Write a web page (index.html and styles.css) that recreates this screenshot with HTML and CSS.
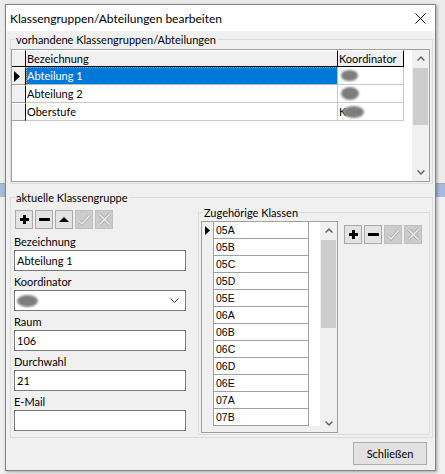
FILE: index.html
```html
<!DOCTYPE html>
<html>
<head>
<meta charset="utf-8">
<link rel="stylesheet" href="styles.css">
</head>
<body>
<div class="window">
  <div class="titlebar">
    <span class="title">Klassengruppen/Abteilungen bearbeiten</span>
    <svg class="close" width="11" height="11" viewBox="0 0 11 11"><path d="M0.5 0.5L10.5 10.5M10.5 0.5L0.5 10.5" stroke="#111" stroke-width="1" fill="none"/></svg>
  </div>
  <div class="client">
    <div class="group g1">
      <span class="caption">vorhandene Klassengruppen/Abteilungen</span>
      <div class="grid1">
        <div class="grid1-body">
          <div class="grow head">
            <div class="rh"></div>
            <div class="c1 hc">Bezeichnung</div>
            <div class="c2 hc">Koordinator</div>
          </div>
          <div class="grow">
            <div class="rh"><svg width="6" height="11" viewBox="0 0 6 11"><path d="M0 0L6 5.5L0 11z" fill="#000"/></svg></div>
            <div class="c1 sel">Abteilung 1</div>
            <div class="c2"><span class="blob b1"></span></div>
          </div>
          <div class="grow">
            <div class="rh"></div>
            <div class="c1">Abteilung 2</div>
            <div class="c2"><span class="blob b2"></span></div>
          </div>
          <div class="grow">
            <div class="rh"></div>
            <div class="c1">Oberstufe</div>
            <div class="c2">K<span class="blob b3"></span></div>
          </div>
        </div>
        <div class="vscroll">
          <div class="sb-btn"><svg width="8" height="5" viewBox="0 0 8 5"><path d="M0.6 4.4L4 1L7.4 4.4" fill="none" stroke="#606060" stroke-width="1.4"/></svg></div>
          <div class="sb-track"><div class="thumb t1"></div></div>
          <div class="sb-btn"><svg width="8" height="5" viewBox="0 0 8 5"><path d="M0.6 0.6L4 4L7.4 0.6" fill="none" stroke="#606060" stroke-width="1.4"/></svg></div>
        </div>
      </div>
    </div>

    <div class="group g2">
      <span class="caption">aktuelle Klassengruppe</span>
      <div class="g2-body">
        <div class="leftcol">
          <div class="toolbar tl">
            <div class="tb"><svg width="9" height="9" viewBox="0 0 9 9"><path d="M3 0h3v3h3v3h-3v3h-3v-3h-3v-3h3z" fill="#000"/></svg></div>
            <div class="tb"><svg width="11" height="3" viewBox="0 0 11 3"><rect width="11" height="3" fill="#000"/></svg></div>
            <div class="tb"><svg width="10" height="5" viewBox="0 0 10 5"><path d="M0 5L5 0L10 5z" fill="#000"/></svg></div>
            <div class="tb dis"><svg width="14" height="12" viewBox="0 0 14 12"><path d="M1.5 6.5L5 10L12.5 1.5" fill="none" stroke="#ababab" stroke-width="3"/><path d="M1.5 6.5L5 10L12.5 1.5" fill="none" stroke="#ededed" stroke-width="1.4"/></svg></div>
            <div class="tb dis"><svg width="13" height="13" viewBox="0 0 13 13"><path d="M1.5 1.5L11.5 11.5M11.5 1.5L1.5 11.5" fill="none" stroke="#ababab" stroke-width="3.4"/><path d="M1.5 1.5L11.5 11.5M11.5 1.5L1.5 11.5" fill="none" stroke="#ededed" stroke-width="1.6"/></svg></div>
          </div>
          <div class="label first">Bezeichnung</div>
          <div class="input">Abteilung 1</div>
          <div class="label">Koordinator</div>
          <div class="input combo"><span class="blob bc"></span><svg class="chev" width="9" height="5" viewBox="0 0 9 5"><path d="M0.5 0.5L4.5 4.5L8.5 0.5" fill="none" stroke="#333" stroke-width="1"/></svg></div>
          <div class="label">Raum</div>
          <div class="input">106</div>
          <div class="label">Durchwahl</div>
          <div class="input">21</div>
          <div class="label">E-Mail</div>
          <div class="input"></div>
        </div>

        <div class="group g3">
          <span class="caption">Zugehörige Klassen</span>
          <div class="g3-body">
            <div class="list">
              <div class="list-body">
                <div class="lrow"><div class="lrh"><svg width="5" height="9" viewBox="0 0 5 9"><path d="M0 0L5 4.5L0 9z" fill="#000"/></svg></div><div class="lc">05A</div></div>
                <div class="lrow"><div class="lrh"></div><div class="lc">05B</div></div>
                <div class="lrow"><div class="lrh"></div><div class="lc">05C</div></div>
                <div class="lrow"><div class="lrh"></div><div class="lc">05D</div></div>
                <div class="lrow"><div class="lrh"></div><div class="lc">05E</div></div>
                <div class="lrow"><div class="lrh"></div><div class="lc">06A</div></div>
                <div class="lrow"><div class="lrh"></div><div class="lc">06B</div></div>
                <div class="lrow"><div class="lrh"></div><div class="lc">06C</div></div>
                <div class="lrow"><div class="lrh"></div><div class="lc">06D</div></div>
                <div class="lrow"><div class="lrh"></div><div class="lc">06E</div></div>
                <div class="lrow"><div class="lrh"></div><div class="lc">07A</div></div>
                <div class="lrow"><div class="lrh"></div><div class="lc">07B</div></div>
              </div>
              <div class="vscroll">
                <div class="sb-btn"><svg width="8" height="5" viewBox="0 0 8 5"><path d="M0.6 4.4L4 1L7.4 4.4" fill="none" stroke="#606060" stroke-width="1.4"/></svg></div>
                <div class="sb-track"><div class="thumb t2"></div></div>
                <div class="sb-btn"><svg width="8" height="5" viewBox="0 0 8 5"><path d="M0.6 0.6L4 4L7.4 0.6" fill="none" stroke="#606060" stroke-width="1.4"/></svg></div>
              </div>
            </div>
            <div class="toolbar tr">
              <div class="tb"><svg width="9" height="9" viewBox="0 0 9 9"><path d="M3 0h3v3h3v3h-3v3h-3v-3h-3v-3h3z" fill="#000"/></svg></div>
              <div class="tb"><svg width="11" height="3" viewBox="0 0 11 3"><rect width="11" height="3" fill="#000"/></svg></div>
              <div class="tb dis"><svg width="14" height="12" viewBox="0 0 14 12"><path d="M1.5 6.5L5 10L12.5 1.5" fill="none" stroke="#ababab" stroke-width="3"/><path d="M1.5 6.5L5 10L12.5 1.5" fill="none" stroke="#ededed" stroke-width="1.4"/></svg></div>
              <div class="tb dis"><svg width="13" height="13" viewBox="0 0 13 13"><path d="M1.5 1.5L11.5 11.5M11.5 1.5L1.5 11.5" fill="none" stroke="#ababab" stroke-width="3.4"/><path d="M1.5 1.5L11.5 11.5M11.5 1.5L1.5 11.5" fill="none" stroke="#ededed" stroke-width="1.6"/></svg></div>
            </div>
          </div>
        </div>
      </div>
    </div>

    <div class="footer">
      <div class="button">Schließen</div>
    </div>
  </div>
</div>
</body>
</html>
```

FILE: styles.css
```css
* { box-sizing: border-box; }
html, body { margin: 0; padding: 0; }
body {
  width: 445px;
  height: 474px;
  overflow: hidden;
  font-family: Lato, "Noto Sans", sans-serif;
  font-size: 11px;
  color: #000;
  background: linear-gradient(to bottom, #ececec 0, #ececec 183px, #a8a8a8 183px, #a8a8a8 184px, #a3bcd9 184px, #a3bcd9 197px, #f0f0f0 197px, #f0f0f0 100%);
}
.window {
  margin: 4px 0 0 5px;
  width: 431px;
  height: 467px;
  border: 1px solid #858585;
  background: #f0f0f0;
  box-shadow: 1px 1px 3px rgba(0,0,0,0.35);
  display: flex;
  flex-direction: column;
}
.titlebar {
  flex: none;
  height: 26px;
  background: #fff;
  display: flex;
  align-items: center;
  padding-left: 4px;
}
.title { flex: 1; font-size: 12px; }
.close { margin-right: 9px; }
.client {
  flex: 1;
  padding: 8px 2px 0 4px;
  display: flex;
  flex-direction: column;
}
.group {
  border: 1px solid #dcdcdc;
  display: flex;
  flex-direction: column;
}
.caption {
  align-self: flex-start;
  height: 16px;
  line-height: 16px;
  margin-top: -8px;
  margin-left: 4px;
  padding: 0 1px;
  background: #f0f0f0;
  white-space: nowrap;
}
.g1 { height: 145px; flex: none; }
.grid1 {
  margin-top: 1px;
  width: 419px;
  height: 133px;
  border: 1px solid #a0a0a0;
  background: #fff;
  display: flex;
}
.grid1-body { width: 400px; }
.grow { display: flex; height: 18px; }
.grow.head { height: 17px; }
.rh {
  width: 14px;
  background: #f0f0f0;
  border-top: 1px solid #fff;
  border-right: 1px solid #000;
  border-bottom: 1px solid #a0a0a0;
  display: flex;
  align-items: center;
  padding-left: 2px;
}
.head .rh { border-bottom: 1px solid #000; }
.c1, .c2 {
  border-right: 1px solid #c8c8c8;
  border-bottom: 1px solid #c8c8c8;
  padding-left: 1px;
  line-height: 16px;
  white-space: nowrap;
  overflow: hidden;
  display: flex;
  align-items: center;
}
.c1 { width: 312px; }
.c2 { width: 66px; }
.hc {
  background: #f0f0f0;
  border-top: 1px solid #fff;
  border-right: 1px solid #000;
  border-bottom: 1px solid #000;
}
.sel {
  background: #0078d7;
  color: #fff;
  outline: 1px dotted #f7a33a;
  outline-offset: -1px;
}
.blob {
  display: inline-block;
  background: #7d7d7d;
  border-radius: 50%;
  filter: blur(0.8px);
}
.b1 { width: 17px; height: 11px; margin-left: 2px; }
.b2 { width: 18px; height: 13px; margin-left: 2px; }
.b3 { width: 21px; height: 12px; margin-left: -3px; }
.bc { width: 21px; height: 12px; margin-left: 0; }

.vscroll {
  width: 17px;
  background: #f0f0f0;
  display: flex;
  flex-direction: column;
  margin-left: auto;
}
.sb-btn { height: 17px; display: flex; align-items: center; justify-content: center; flex: none; }
.sb-track { flex: 1; padding: 1px 1px 0 1px; }
.thumb { background: #cdcdcd; }
.t1 { height: 57px; }
.t2 { height: 88px; }

.g2 { margin-top: 13px; height: 241px; flex: none; }
.g2-body { display: flex; align-items: flex-start; }
.leftcol { margin-left: 3px; margin-top: 4px; width: 172px; }
.toolbar { display: flex; gap: 2px; }
.toolbar.tl { margin-left: 1px; }
.tb {
  width: 18px;
  height: 19px;
  border: 1px solid #a9a9a9;
  background: #e3e3e3;
  display: flex;
  align-items: center;
  justify-content: center;
}
.tb.dis { background: #cccccc; border-color: #bfbfbf; }
.label { height: 16px; line-height: 16px; margin-top: 3px; }
.label.first { margin-top: 5px; }
.input {
  height: 21px;
  border: 1px solid #7a7a7a;
  background: #fff;
  padding-left: 2px;
  line-height: 19px;
  display: flex;
  align-items: center;
}
.combo .chev { margin-left: auto; margin-right: 6px; }

.g3 { margin-left: 12px; margin-top: 6px; width: 232px; height: 223px; }
.g3-body { display: flex; align-items: flex-start; }
.list {
  margin-left: 2px;
  width: 137px;
  height: 212px;
  border: 1px solid #a0a0a0;
  background: #f0f0f0;
  display: flex;
}
.list-body { width: 118px; background: linear-gradient(#fff, #fff) no-repeat 0 0 / 100% 204px; }
.lrow { display: flex; height: 17px; }
.lrh {
  width: 11px;
  background: #f0f0f0;
  display: flex;
  align-items: center;
  padding-left: 3px;
}
.lc {
  width: 96px;
  background: #fff;
  border-left: 1px solid #a0a0a0;
  border-right: 1px solid #a0a0a0;
  border-bottom: 1px solid #a0a0a0;
  font-family: "Liberation Sans", Arial, sans-serif;
  font-size: 10.5px;
  line-height: 16px;
  padding-left: 2px;
}
.toolbar.tr { margin-left: 6px; margin-top: 4px; }

.footer { display: flex; justify-content: flex-end; margin-top: 4px; margin-right: 6px; }
.button {
  width: 74px;
  height: 23px;
  border: 1px solid #adadad;
  background: #e1e1e1;
  display: flex;
  align-items: center;
  justify-content: center;
}
```
